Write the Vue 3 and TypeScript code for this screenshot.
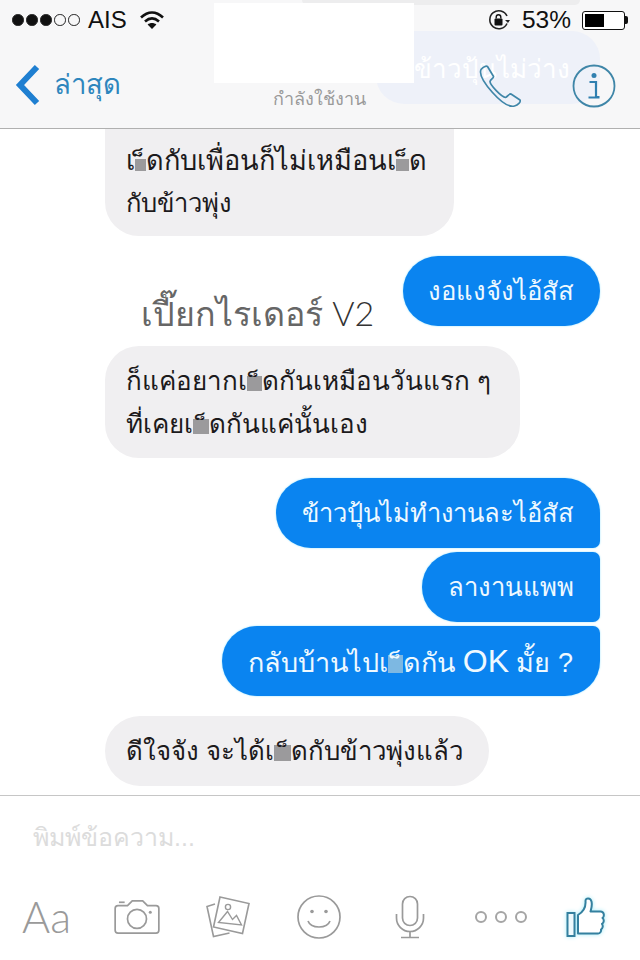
<script setup lang="ts">
interface Seg { t: string; w?: number; h?: number; latin?: boolean }
const MARK = '\u00A0\u0E47'
const maskSize = (s: Seg) => ({ width: `${s.w}px`, height: `${s.h}px` })
const markLeft = (s: Seg) => ({ left: `${(s.w ?? 8) - 8}px` })

const gray1: Seg[][] = [
  [{ t: 'เ' }, { t: MARK, w: 11, h: 12 }, { t: 'ดกับเพื่อนก็ไม่เหมือนเ' }, { t: MARK, w: 13, h: 12 }, { t: 'ด' }],
  [{ t: 'กับข้าวพุ่ง' }]
]
const gray2: Seg[][] = [
  [{ t: 'ก็แค่อยากเ' }, { t: MARK, w: 15, h: 15 }, { t: 'ดกันเหมือนวันแรก ๆ' }],
  [{ t: 'ที่เคยเ' }, { t: MARK, w: 16, h: 15 }, { t: 'ดกันแค่นั้นเอง' }]
]
const blue3: Seg[] = [{ t: 'กลับบ้านไปเ' }, { t: MARK, w: 15, h: 18 }, { t: 'ดกัน ' }, { t: 'OK', latin: true }, { t: ' มั้ย ?' }]
const gray3: Seg[] = [{ t: 'ดีใจจัง จะได้เ' }, { t: MARK, w: 17, h: 16 }, { t: 'ดกับข้าวพุ่งแล้ว' }]
</script>

<template>
  <div class="screen">
    <header class="head">
      <div class="ghost-top"></div>
      <div class="ghost-bubble">ข้าวปุ้นไม่ว่าง</div>
      <div class="name-cover"></div>

      <div class="status">
        <div class="status-left">
          <span class="dot on"></span><span class="dot on"></span><span class="dot on"></span><span class="dot"></span><span class="dot"></span>
          <span class="carrier">AIS</span>
          <svg class="wifi" width="26" height="20" viewBox="0 0 26 20">
            <path d="M2 7.500C9 1 17 1 24 7.500" fill="none" stroke="#111" stroke-width="2.600" />
            <path d="M6 11.500C10.500 7.500 15.500 7.500 20 11.500" fill="none" stroke="#111" stroke-width="2.600" />
            <path d="M13 19l-4.400-4.600c2.600-2 6.200-2 8.800 0z" fill="#111" />
          </svg>
        </div>
        <div class="status-right">
          <svg width="24" height="24" viewBox="0 0 24 24">
            <path d="M20 15.500A9 9 0 1 1 20 8" fill="none" stroke="#222" stroke-width="1.600" />
            <path d="M21 15l2-3h-5z" fill="#222" />
            <rect x="7.500" y="10.500" width="8" height="7" rx="1" fill="#111" />
            <path d="M9.200 10.500V9a2.300 2.300 0 0 1 4.600 0v1.500" fill="none" stroke="#111" stroke-width="1.400" />
          </svg>
          <span class="pct">53%</span>
          <div class="battery"><div class="level"></div></div>
          <div class="nub"></div>
        </div>
      </div>

      <div class="nav">
        <div class="back">
          <svg width="28" height="42" viewBox="0 0 28 42">
            <path d="M23 3L6 21l17 18" fill="none" stroke="#1f7fd1" stroke-width="6" />
          </svg>
          <span class="back-label">ล่าสุด</span>
        </div>
        <div class="presence">กำลังใช้งาน</div>
        <div class="actions">
          <svg width="46" height="44" viewBox="0 0 46 44">
            <path d="M4 5.500C6 3 9 1.500 10.500 2.500L16.500 12.500C17 14 13.500 15.500 13 17.500C13 21 24.500 33 28.500 33.500C30.500 33 32 29.500 34 30L43 36C44 38 41 41 37.500 42C32 43.500 24 38 15.500 28.500C7 19 2 10 4 5.500Z" fill="none" stroke="#3f86a8" stroke-width="1.700" stroke-linejoin="round" />
          </svg>
          <svg width="46" height="46" viewBox="0 0 46 46">
            <circle cx="23" cy="23" r="20.500" fill="none" stroke="#3f86a8" stroke-width="1.800" />
            <circle cx="23" cy="12.500" r="2.500" fill="#2f7fb0" />
            <path d="M18.500 19h6.500v15h3.500M17.500 34.500h11" fill="none" stroke="#2f7fb0" stroke-width="2.200" />
          </svg>
        </div>
      </div>
    </header>

    <main class="thread">
      <div class="bubble gray first">
        <div v-for="(line, i) in gray1" :key="i" class="line" :class="`line-${i}`">
          <template v-for="(s, j) in line" :key="j"><span v-if="s.w" class="mask" :style="maskSize(s)"><span class="mark" :style="markLeft(s)">{{ s.t }}</span></span><template v-else>{{ s.t }}</template></template>
        </div>
      </div>

      <div class="caption-row">
        <div class="caption">เปี๊ยกไรเดอร์ <span class="caption-latin">V2</span></div>
        <div class="bubble blue single">งอแงจังไอ้สัส</div>
      </div>

      <div class="bubble gray second">
        <div v-for="(line, i) in gray2" :key="i" class="line">
          <template v-for="(s, j) in line" :key="j"><span v-if="s.w" class="mask" :style="maskSize(s)"><span class="mark" :style="markLeft(s)">{{ s.t }}</span></span><template v-else>{{ s.t }}</template></template>
        </div>
      </div>

      <div class="blue-stack">
        <div class="bubble blue top">ข้าวปุ้นไม่ทำงานละไอ้สัส</div>
        <div class="bubble blue mid">ลางานแพพ</div>
        <div class="bubble blue bottom">
          <template v-for="(s, j) in blue3" :key="j"><span v-if="s.w" class="mask light" :style="maskSize(s)"><span class="mark" :style="markLeft(s)">{{ s.t }}</span></span><span v-else-if="s.latin" class="latin">{{ s.t }}</span><template v-else>{{ s.t }}</template></template>
        </div>
      </div>

      <div class="bubble gray third">
        <template v-for="(s, j) in gray3" :key="j"><span v-if="s.w" class="mask" :style="maskSize(s)"><span class="mark" :style="markLeft(s)">{{ s.t }}</span></span><template v-else>{{ s.t }}</template></template>
      </div>
    </main>

    <footer class="composer">
      <div class="placeholder">พิมพ์ข้อความ...</div>
      <div class="tools">
        <span class="aa">Aa</span>
        <svg width="46" height="38" viewBox="0 0 48 40">
          <path d="M4 8h10l5-5h11l5 5h9c2 0 3 1 3 3v23c0 2-1 3-3 3H4c-2 0-3-1-3-3V11c0-2 1-3 3-3z" fill="none" stroke="#9a9a9a" stroke-width="1.800" />
          <path d="M5 4.500h6" stroke="#9a9a9a" stroke-width="1.800" />
          <circle cx="24" cy="22" r="10" fill="none" stroke="#9a9a9a" stroke-width="1.800" />
          <circle cx="38" cy="15" r="1.600" fill="#9a9a9a" />
        </svg>
        <svg width="46" height="44" viewBox="0 0 46 44">
          <path d="M10 9L2 11.500l6.500 30 16-3.500" fill="none" stroke="#9a9a9a" stroke-width="1.600" />
          <path d="M15 2l29 6.500-6.500 30-29-6.500z" fill="none" stroke="#9a9a9a" stroke-width="1.600" />
          <circle cx="23" cy="12" r="2.600" fill="none" stroke="#9a9a9a" stroke-width="1.400" />
          <path d="M13.500 27.500l9-11 5 8 4-4 5 9.500z" fill="none" stroke="#9a9a9a" stroke-width="1.400" />
        </svg>
        <svg width="46" height="46" viewBox="0 0 46 46">
          <circle cx="23" cy="23" r="21" fill="none" stroke="#9a9a9a" stroke-width="1.700" />
          <circle cx="16" cy="17.500" r="1.800" fill="#9a9a9a" />
          <circle cx="30" cy="17.500" r="1.800" fill="#9a9a9a" />
          <path d="M12 27c3 8 19 8 22 0" fill="none" stroke="#9a9a9a" stroke-width="1.700" />
        </svg>
        <svg width="30" height="44" viewBox="0 0 30 44">
          <rect x="7.500" y="1.500" width="15" height="29" rx="7.500" fill="none" stroke="#9a9a9a" stroke-width="1.700" />
          <path d="M1.500 19v4a13.500 13.500 0 0 0 27 0v-4M15 36.500V42M6 42.500h18" fill="none" stroke="#9a9a9a" stroke-width="1.700" />
        </svg>
        <div class="more"><span></span><span></span><span></span></div>
        <svg class="like" width="44" height="44" viewBox="0 0 44 44">
          <rect x="2.500" y="18" width="7" height="23" fill="#eefafd" stroke="#34809f" stroke-width="2" />
          <path d="M13 38.500V20c5-3 8-8 7.500-14 0-3.500 5-3.500 6 .5 1 4-.5 8-1 10h10c4 0 4 5 2 6.500 2 1.500 1.500 5-.5 6 1.500 2 .5 4.500-1 5.500 .5 2-1 4-3 4z" fill="#fff" stroke="#34809f" stroke-width="2" stroke-linejoin="round" />
        </svg>
      </div>
    </footer>
  </div>
</template>

<style scoped>
.screen {
  width: 640px;
  height: 960px;
  background: #fff;
  overflow: hidden;
  display: flex;
  flex-direction: column;
  font-family: "Liberation Sans", "Noto Sans", sans-serif;
}

.head {
  position: relative;
  height: 129px;
  flex: none;
  box-sizing: border-box;
  background: #f7f7f8;
  border-bottom: 1px solid #b0b0b0;
  overflow: hidden;
}
.ghost-top {
  position: absolute;
  left: 302px;
  top: -5px;
  width: 278px;
  height: 10px;
  border-radius: 6px;
  background: #ededee;
}
.ghost-bubble {
  position: absolute;
  left: 376px;
  top: 31px;
  width: 224px;
  height: 73px;
  border-radius: 28px;
  background: #eef1f9;
  color: #fff;
  font-size: 26px;
  line-height: 77px;
  white-space: nowrap;
  display: flex;
  justify-content: flex-end;
  padding-right: 30px;
  box-sizing: border-box;
}
.name-cover {
  position: absolute;
  left: 214px;
  top: 3px;
  width: 200px;
  height: 80px;
  background: #fff;
}

.status {
  position: relative;
  height: 40px;
  display: flex;
  justify-content: space-between;
  align-items: center;
  padding: 0 12px 0 12px;
  color: #111;
  font-size: 24px;
}
.status-left, .status-right { display: flex; align-items: center; }
.dot {
  width: 11.500px;
  height: 11.500px;
  box-sizing: border-box;
  border: 1px solid #222;
  border-radius: 50%;
  margin-right: 2.500px;
}
.dot.on { background: #111; }
.carrier { margin: 0 12px 0 6px; }
.pct { margin: 0 11px 0 11px; font-size: 24.500px; }
.battery {
  width: 43px;
  height: 19px;
  box-sizing: border-box;
  border: 1.500px solid #111;
  border-radius: 3px;
  padding: 2px;
  background: #fff;
}
.level { width: 50%; height: 100%; background: #000; }
.nub { width: 3px; height: 8px; background: #111; border-radius: 0 2px 2px 0; }

.nav {
  position: relative;
  height: 88px;
  display: flex;
  align-items: flex-start;
  justify-content: space-between;
  padding: 0 23px 0 14px;
}
.back { display: flex; align-items: center; gap: 12px; margin-top: 24px; }
.back-label { color: #2e86bd; font-size: 27.500px; line-height: 42px; }
.presence {
  position: absolute;
  left: 273px;
  top: 46px;
  color: #9a9a9a;
  font-size: 18px;
  line-height: 26px;
}
.actions { display: flex; align-items: center; gap: 48px; margin-top: 23px; }

.thread {
  flex: 1;
  min-height: 0;
  display: flex;
  flex-direction: column;
  align-items: flex-start;
  padding: 0 40px 0 105px;
  overflow: hidden;
}
.bubble {
  box-sizing: border-box;
  font-size: 26px;
  white-space: nowrap;
}
.line { height: 43px; line-height: 43px; }
.line-0 { font-size: 27.200px; }
.line-1 { font-size: 25.600px; }
.gray { background: #f0eff1; color: #1c1a1c; padding: 13px 21px; border-radius: 34px; }
.blue {
  height: 70px;
  line-height: 70px;
  padding: 0 26px;
  margin-left: auto;
  background: #0a84f0;
  color: #eef9ff;
  border-radius: 35px;
  box-shadow: 0 0 2px #8fe0ff;
}
.first { width: 349px; height: 107px; padding-top: 10px; border-radius: 0 0 34px 34px / 0 0 34px 34px; }
.caption-row {
  width: 100%;
  display: flex;
  align-items: flex-start;
  justify-content: space-between;
  margin-top: 20px;
  height: 70px;
}
.caption {
  margin: 34px 0 0 36px;
  color: #666;
  font-family: Lato, "Liberation Sans", sans-serif;
  font-size: 34px;
  line-height: 46px;
  font-weight: 300;
}
.caption-latin { color: #333; }
.single { font-size: 25.700px; padding-left: 25px; }
.second { width: 415px; height: 112px; margin-top: 20px; padding-top: 14px; }
.blue-stack {
  align-self: flex-end;
  display: flex;
  flex-direction: column;
  gap: 4px;
  margin-top: 20px;
}
.top { font-size: 25.500px; border-radius: 35px 35px 7px 35px; }
.mid { font-size: 25.700px; border-radius: 35px 7px 7px 35px; }
.bottom { font-size: 27px; padding: 0 27px 0 26px; border-radius: 35px 7px 35px 35px; }
.latin { font-size: 32px; }
.third {
  width: 384px;
  height: 70px;
  margin-top: 20px;
  padding: 0 21px;
  font-size: 25.800px;
  line-height: 70px;
  border-radius: 35px;
}
.mask {
  position: relative;
  display: inline-block;
  margin-bottom: -1px;
  background: #9b9a9c;
}
.mask.light { background: #7db8e2; }
.mark {
  position: absolute;
  bottom: -7px;
  line-height: 26px;
  color: #1c1a1c;
}
.mask.light .mark { color: #eef9ff; }

.composer {
  flex: none;
  height: 165px;
  box-sizing: border-box;
  border-top: 1px solid #c6c6c6;
  padding: 25px 0 0 22px;
}
.placeholder { color: #dcdcdc; font-size: 25px; line-height: 32px; margin-left: 11px; }
.tools {
  display: grid;
  grid-template-columns: 92px 91px 91px 99px 80px 90px auto;
  align-items: center;
  margin-top: 38px;
  height: 46px;
}
.aa { color: #9a9a9a; font-size: 43px; font-weight: 300; font-family: Lato, "Liberation Sans", sans-serif; }
.more { display: flex; gap: 8px; }
.more span {
  width: 12px;
  height: 12px;
  box-sizing: border-box;
  border: 2px solid #a5a5a5;
  border-radius: 50%;
}
.like { filter: drop-shadow(0 0 2px #a5ecf8); }
</style>
